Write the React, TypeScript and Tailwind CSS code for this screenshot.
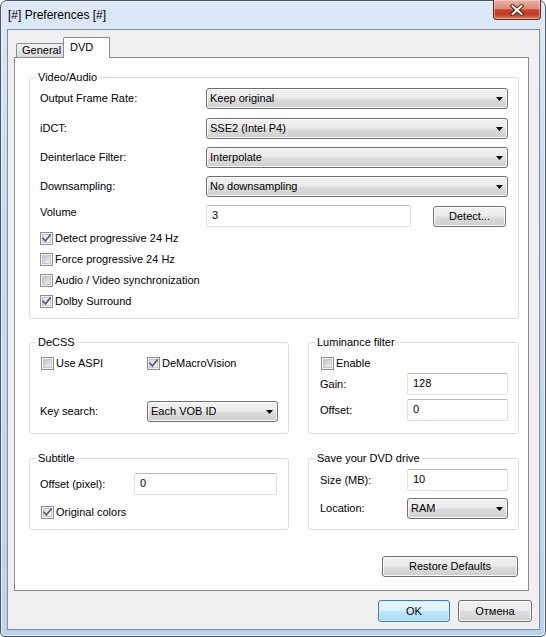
import React from 'react';

const btnBg =
  'bg-[linear-gradient(to_bottom,#f2f2f2_0%,#ebebeb_48%,#dddddd_52%,#cfcfcf_100%)] shadow-[inset_0_0_0_1px_#fbfbfb]';

const Arrow = () => (
  <svg width="7" height="4" viewBox="0 0 7 4" className="shrink-0">
    <polygon points="0,0 7,0 3.5,4" fill="#000" />
  </svg>
);

const Dropdown = ({ value, className = '' }: { value: string; className?: string }) => (
  <div
    className={`h-[21px] flex items-center justify-between border border-[#707070] rounded-[3px] pl-[3px] pr-[4px] ${btnBg} ${className}`}
  >
    <span className="truncate">{value}</span>
    <Arrow />
  </div>
);

const Edit = ({ value, className = '' }: { value: string; className?: string }) => (
  <div
    className={`h-[22px] flex items-center bg-white border border-[#dbdfe6] border-t-[#b5b9c1] rounded-[2px] pl-[5px] pb-[1px] ${className}`}
  >
    {value}
  </div>
);

const Button = ({
  label,
  className = '',
  primary,
}: {
  label: string;
  className?: string;
  primary?: boolean;
}) => (
  <div
    className={`flex items-center justify-center rounded-[3px] border ${
      primary
        ? 'border-[#3c7fb1] bg-[linear-gradient(to_bottom,#eaf6fd_0%,#d9f0fc_48%,#bee6fd_52%,#a7d9f5_100%)] shadow-[inset_0_0_0_1px_#cfeefc]'
        : `border-[#707070] ${btnBg}`
    } ${className}`}
  >
    {label}
  </div>
);

const Checkbox = ({ checked, label, className = '' }: { checked?: boolean; label: string; className?: string }) => (
  <div className={`flex items-center h-[13px] gap-[2px] ${className}`}>
    <svg width="13" height="13" viewBox="0 0 13 13" className="shrink-0">
      <defs>
        <linearGradient id={checked ? 'cbOn' : 'cbOff'} x1="0" y1="0" x2="1" y2="1">
          <stop offset="0" stopColor={checked ? '#dcdee2' : '#b9bdc3'} />
          <stop offset="1" stopColor={checked ? '#fbfbfb' : '#f4f4f4'} />
        </linearGradient>
      </defs>
      <rect x="0.5" y="0.5" width="12" height="12" fill="#f4f4f4" stroke="#8e8f8f" />
      <rect x="2.5" y="2.5" width="8" height="8" fill={`url(#${checked ? 'cbOn' : 'cbOff'})`} stroke="#c4c7cc" />
      {checked && (
        <path d="M3 6.4 L5.4 9 L10.2 3" fill="none" stroke="#4a5d8f" strokeWidth="1.7" strokeLinecap="square" />
      )}
    </svg>
    <span className="whitespace-nowrap">{label}</span>
  </div>
);

const Group = ({
  title,
  className = '',
  bodyClass = '',
  children,
}: {
  title: string;
  className?: string;
  bodyClass?: string;
  children: React.ReactNode;
}) => (
  <div className={`border border-[#d5dfe5] rounded-[3px] flex flex-col ${className}`}>
    <span className="-mt-[7px] ml-[6px] px-[2px] h-[13px] leading-[13px] bg-white w-fit whitespace-nowrap">
      {title}
    </span>
    <div className={`flex flex-col ${bodyClass}`}>{children}</div>
  </div>
);

const Row = ({ label, children }: { label: string; children: React.ReactNode }) => (
  <div className="flex items-center">
    <span className="w-[166px] shrink-0 -mt-[1px]">{label}</span>
    {children}
  </div>
);

export default function App() {
  return (
    <div className="w-[546px] h-[637px] font-['Liberation_Sans',Arial,sans-serif] text-[11px] leading-[13px] text-black">
      <div className="w-full h-full flex flex-col border border-[#4a5566] rounded-t-[7px] rounded-b-[5px] bg-[linear-gradient(to_bottom,#dde9f7_0%,#cadcf1_30%,#bdd3ed_100%)] shadow-[inset_0_0_0_1px_#e9f2fb]">
        {/* title bar */}
        <div className="relative h-[28px] shrink-0 pl-[7px] pt-[7px]">
          <span className="text-[12px] leading-[14px]">[#] Preferences [#]</span>
          <div className="absolute right-[4px] -top-px w-[48px] h-[20px] rounded-b-[4px] border border-[#592a22] border-t-0 bg-[linear-gradient(to_bottom,#eab3a6_0%,#dd8c7b_45%,#c8452b_52%,#c13b21_75%,#dc7b61_100%)] shadow-[inset_0_0_0_1px_rgba(255,220,210,0.5)] flex items-center justify-center">
            <svg width="16" height="12" viewBox="0 0 16 12">
              <path d="M3.5 2 L12.5 10 M12.5 2 L3.5 10" stroke="#4b2018" strokeWidth="4" strokeLinecap="square" />
              <path d="M3.5 2 L12.5 10 M12.5 2 L3.5 10" stroke="#ffffff" strokeWidth="2" strokeLinecap="square" />
            </svg>
          </div>
        </div>

        {/* client area */}
        <div className="ml-[6px] w-[533px] h-[601px] shrink-0 border border-[#7d8da3] bg-[#f0f0f0] flex flex-col pt-[7px] pl-[6px] pr-[10px]">
          {/* tabs */}
          <div className="h-[20px] flex items-end pl-[2px] shrink-0">
            <div className="w-[48px] h-[14px] border border-b-0 border-[#898c95] rounded-t-[2px] bg-[linear-gradient(to_bottom,#f3f3f3,#dcdcdc)] flex items-center pl-[5px]">
              General
            </div>
            <div className="relative z-10 -ml-px -mb-px w-[47px] h-[21px] border border-b-0 border-[#898c95] rounded-t-[2px] bg-white pl-[6px] pt-[3px]">
              DVD
            </div>
          </div>

          {/* tab panel */}
          <div className="h-[534px] shrink-0 border border-[#898c95] bg-white flex flex-col pt-[19px] pl-[14px] pr-[9px]">
            <Group title="Video/Audio" bodyClass="px-[10px] pt-[4px] pb-[10px]">
              <Row label="Output Frame Rate:">
                <Dropdown value="Keep original" className="w-[302px]" />
              </Row>
              <div className="mt-[9px]">
                <Row label="iDCT:">
                  <Dropdown value="SSE2 (Intel P4)" className="w-[302px]" />
                </Row>
              </div>
              <div className="mt-[8px]">
                <Row label="Deinterlace Filter:">
                  <Dropdown value="Interpolate" className="w-[302px]" />
                </Row>
              </div>
              <div className="mt-[8px]">
                <Row label="Downsampling:">
                  <Dropdown value="No downsampling" className="w-[302px]" />
                </Row>
              </div>
              <div className="mt-[8px] flex items-start">
                <span className="w-[166px] shrink-0 mt-[1px]">Volume</span>
                <Edit value="3" className="w-[205px]" />
                <Button label="Detect..." className="ml-[22px] mt-[1px] w-[73px] h-[21px]" />
              </div>
              <div className="mt-[5px] flex flex-col gap-[8px]">
                <Checkbox checked label="Detect progressive 24 Hz" />
                <Checkbox label="Force progressive 24 Hz" />
                <Checkbox label="Audio / Video synchronization" />
                <Checkbox checked label="Dolby Surround" />
              </div>
            </Group>

            <div className="mt-[23px] flex gap-[19px]">
              <Group title="DeCSS" className="w-[260px]" bodyClass="pl-[10px] pr-[10px] pt-[8px] pb-[11px]">
                <div className="flex">
                  <Checkbox label="Use ASPI" className="ml-[1px] w-[106px]" />
                  <Checkbox checked label="DeMacroVision" />
                </div>
                <div className="mt-[31px] flex items-center">
                  <span className="w-[107px] shrink-0 -mt-[1px]">Key search:</span>
                  <Dropdown value="Each VOB ID" className="w-[131px]" />
                </div>
              </Group>
              <Group title="Luminance filter" className="w-[211px]" bodyClass="pl-[11px] pr-[10px] pt-[8px] pb-[12px]">
                <Checkbox label="Enable" className="ml-[1px]" />
                <div className="mt-[3px] flex items-center justify-between">
                  <span>Gain:</span>
                  <Edit value="128" className="w-[101px]" />
                </div>
                <div className="mt-[4px] flex items-center justify-between">
                  <span>Offset:</span>
                  <Edit value="0" className="w-[101px]" />
                </div>
              </Group>
            </div>

            <div className="mt-[24px] flex gap-[19px]">
              <Group title="Subtitle" className="w-[260px]" bodyClass="pl-[10px] pr-[11px] pt-[8px] pb-[10px]">
                <div className="flex items-center justify-between">
                  <span>Offset (pixel):</span>
                  <Edit value="0" className="w-[143px]" />
                </div>
                <Checkbox checked label="Original colors" className="mt-[11px] ml-[1px]" />
              </Group>
              <Group title="Save your DVD drive" className="w-[211px]" bodyClass="pl-[11px] pr-[10px] pt-[4px] pb-[10px]">
                <div className="flex items-center justify-between">
                  <span>Size (MB):</span>
                  <Edit value="10" className="w-[101px]" />
                </div>
                <div className="mt-[7px] flex items-center justify-between">
                  <span>Location:</span>
                  <Dropdown value="RAM" className="w-[101px]" />
                </div>
              </Group>
            </div>

            <Button label="Restore Defaults" className="mt-[26px] self-end mr-[1px] w-[136px] h-[21px]" />
          </div>

          {/* dialog buttons */}
          <div className="mt-[9px] -mr-[3px] flex justify-end gap-[8px]">
            <Button primary label="OK" className="w-[72px] h-[22px]" />
            <Button label="Отмена" className="w-[74px] h-[22px]" />
          </div>
        </div>
      </div>
    </div>
  );
}
